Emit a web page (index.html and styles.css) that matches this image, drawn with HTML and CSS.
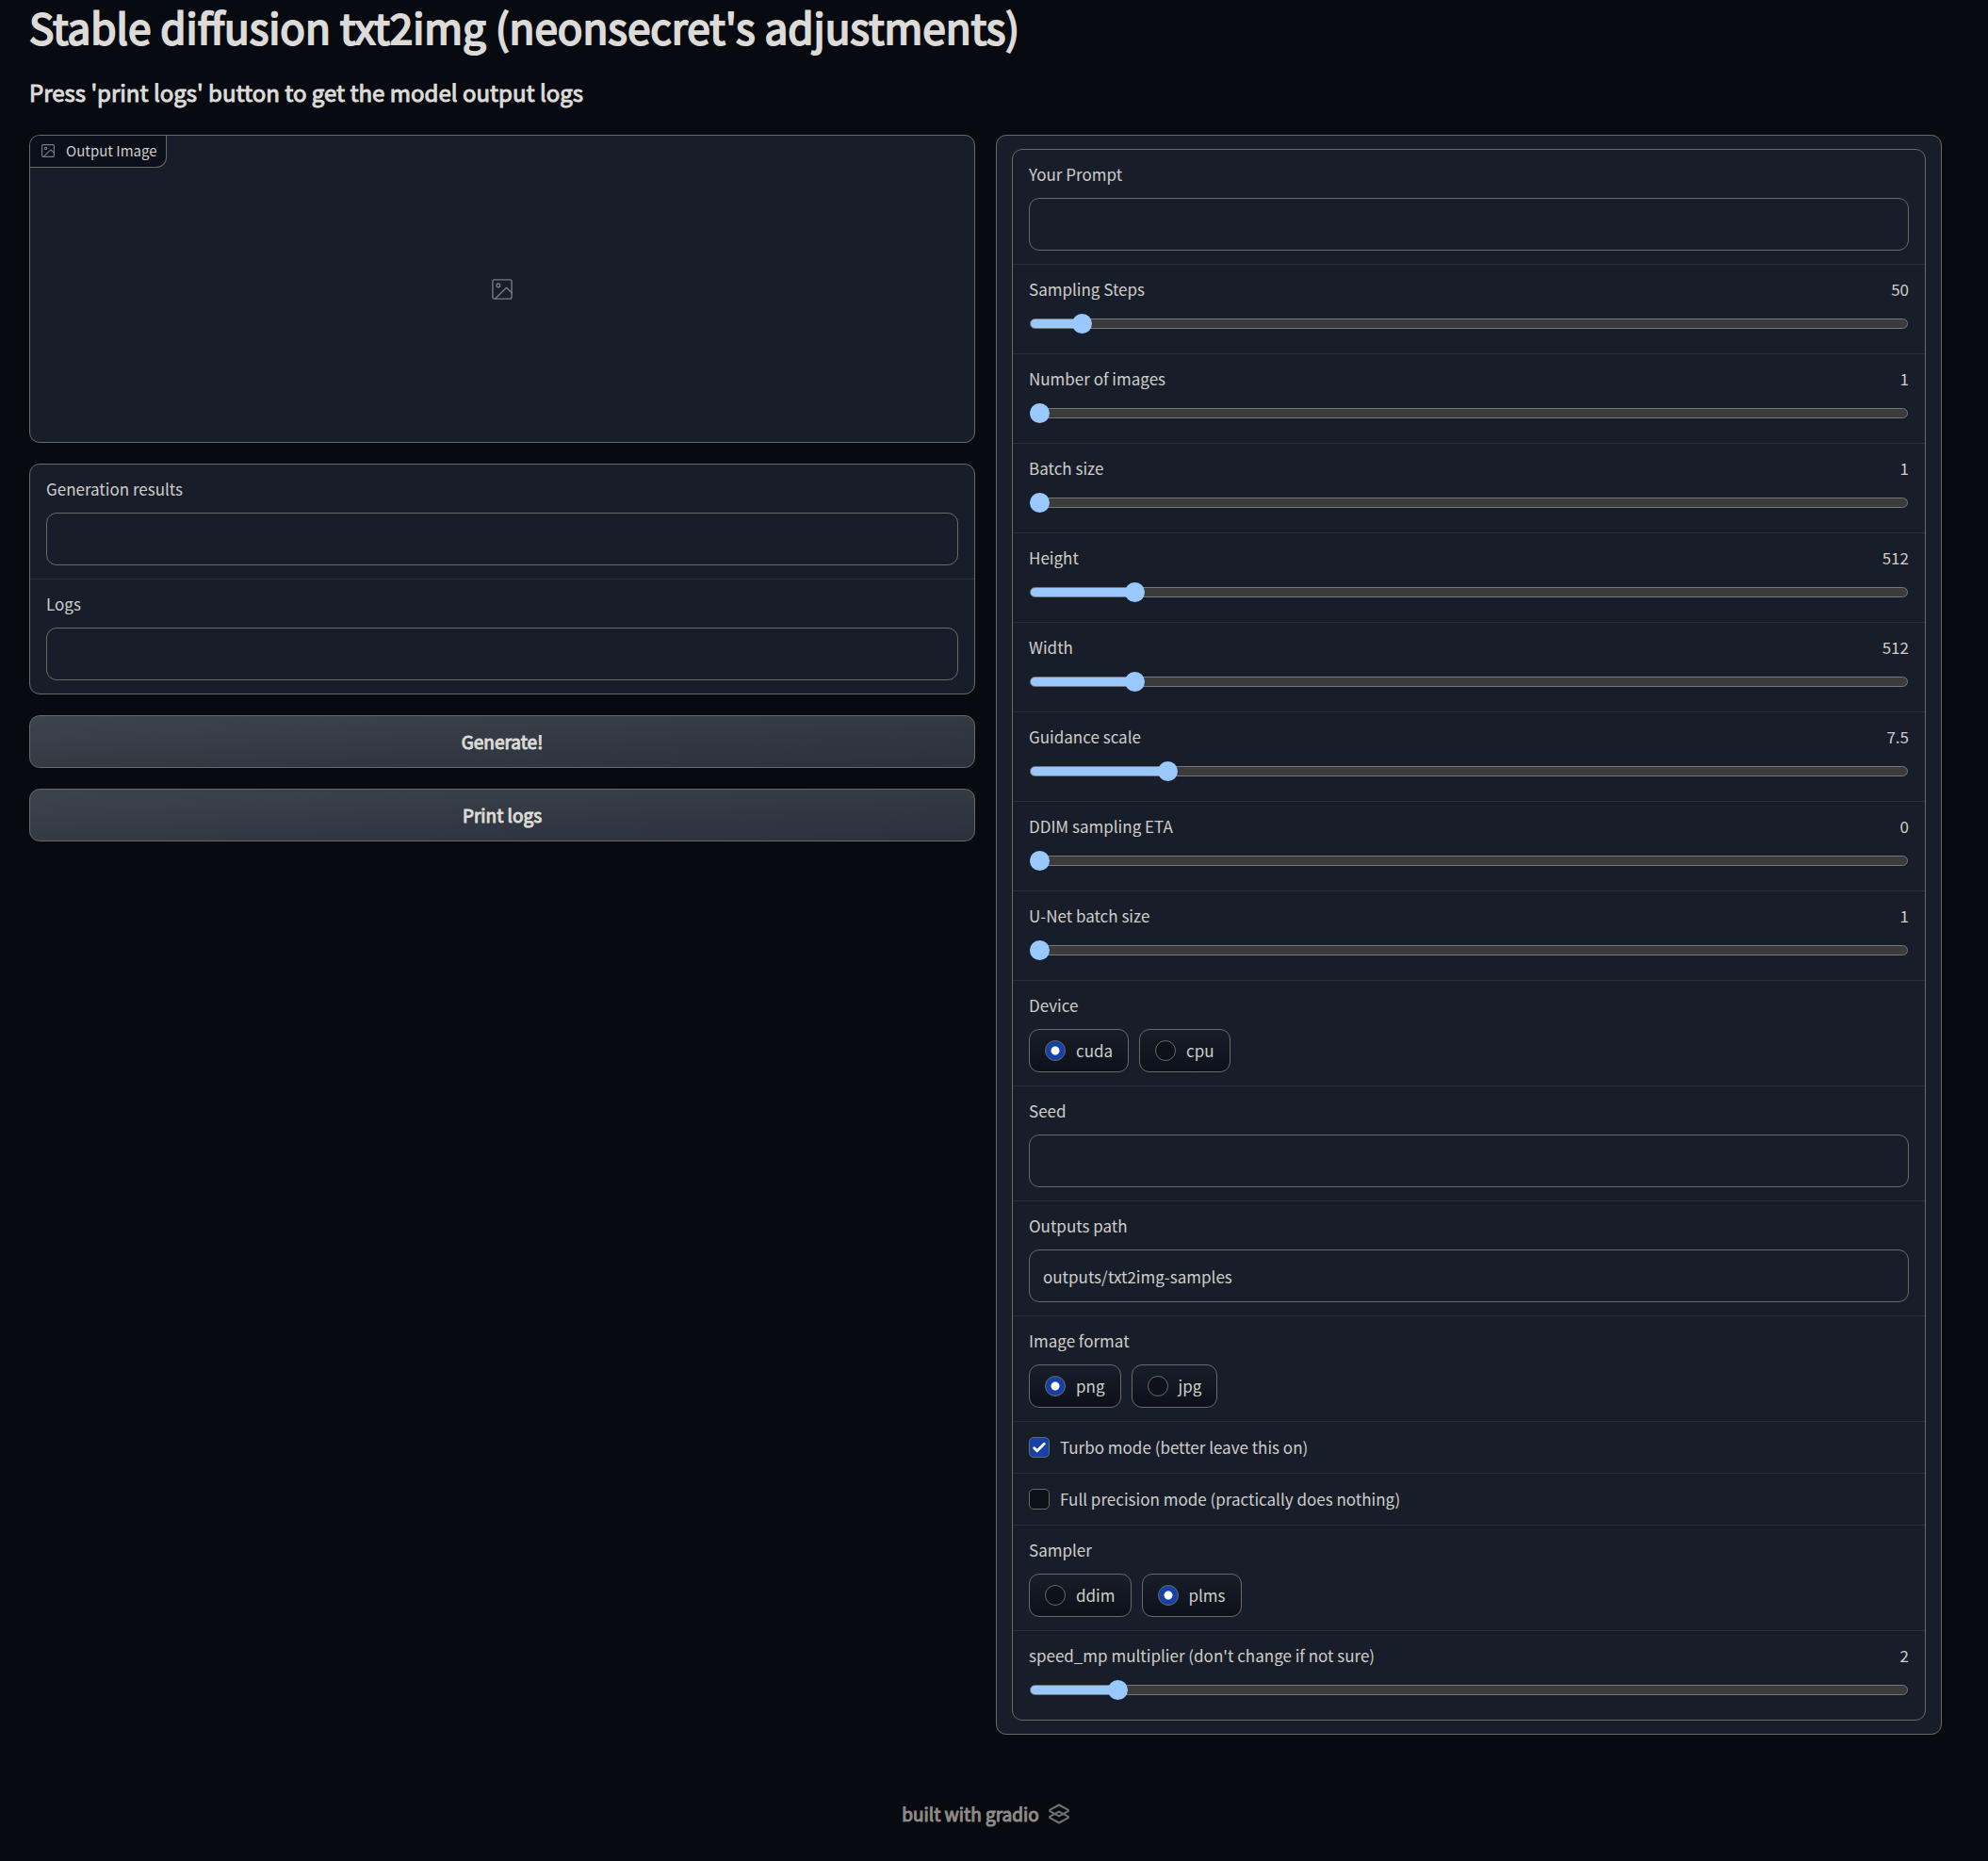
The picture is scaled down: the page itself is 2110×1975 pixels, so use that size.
FILE: index.html
```html
<!DOCTYPE html>
<html lang="en">
<head>
<meta charset="utf-8">
<meta name="viewport" content="width=device-width, initial-scale=1">
<title>Stable diffusion txt2img</title>
<link rel="stylesheet" href="styles.css">
</head>
<body>
<header class="header">
  <h1 class="title">Stable diffusion txt2img (neonsecret's adjustments)</h1>
  <h2 class="subtitle">Press 'print logs' button to get the model output logs</h2>
</header>

<main class="columns">
  <section class="column">
    <figure class="panel preview">
      <figcaption class="preview-label">
        <svg class="icon-small" viewBox="0 0 24 24" fill="none" stroke="currentColor" stroke-width="2" stroke-linecap="round" stroke-linejoin="round" aria-hidden="true"><rect x="1" y="1" width="22" height="22" rx="2"/><circle cx="7.5" cy="7.5" r="2"/><path d="M23 16l-6-6L4 23"/></svg>
        <span>Output Image</span>
      </figcaption>
      <svg class="icon-large" viewBox="0 0 24 24" fill="none" stroke="currentColor" stroke-width="1.5" stroke-linecap="round" stroke-linejoin="round" aria-hidden="true"><rect x="1" y="1" width="22" height="22" rx="2"/><circle cx="7.5" cy="7.5" r="2"/><path d="M23 16l-6-6L4 23"/></svg>
    </figure>

    <div class="panel">
      <div class="field">
        <label class="label" for="results">Generation results</label>
        <input class="textbox" id="results" type="text" readonly>
      </div>
      <div class="field">
        <label class="label" for="logs">Logs</label>
        <input class="textbox" id="logs" type="text" readonly>
      </div>
    </div>

    <button class="button" type="button">Generate!</button>
    <button class="button" type="button">Print logs</button>
  </section>

  <form class="column panel settings">
    <div class="panel">
      <div class="field">
        <label class="label" for="prompt">Your Prompt</label>
        <input class="textbox" id="prompt" type="text">
      </div>
      <div class="field">
        <div class="slider-head"><label class="label" for="steps">Sampling Steps</label><input class="number" type="number" value="50" aria-label="Sampling Steps value"></div>
        <input class="slider" id="steps" type="range" min="1" max="1000" value="50" style="--fill: 0.049">
      </div>
      <div class="field">
        <div class="slider-head"><label class="label" for="images">Number of images</label><input class="number" type="number" value="1" aria-label="Number of images value"></div>
        <input class="slider" id="images" type="range" min="1" max="50" value="1" style="--fill: 0">
      </div>
      <div class="field">
        <div class="slider-head"><label class="label" for="batch">Batch size</label><input class="number" type="number" value="1" aria-label="Batch size value"></div>
        <input class="slider" id="batch" type="range" min="1" max="50" value="1" style="--fill: 0">
      </div>
      <div class="field">
        <div class="slider-head"><label class="label" for="height">Height</label><input class="number" type="number" value="512" aria-label="Height value"></div>
        <input class="slider" id="height" type="range" min="64" max="4096" step="64" value="512" style="--fill: 0.111">
      </div>
      <div class="field">
        <div class="slider-head"><label class="label" for="width">Width</label><input class="number" type="number" value="512" aria-label="Width value"></div>
        <input class="slider" id="width" type="range" min="64" max="4096" step="64" value="512" style="--fill: 0.111">
      </div>
      <div class="field">
        <div class="slider-head"><label class="label" for="guidance">Guidance scale</label><input class="number" type="number" value="7.5" step="0.1" aria-label="Guidance scale value"></div>
        <input class="slider" id="guidance" type="range" min="0" max="50" step="0.1" value="7.5" style="--fill: 0.15">
      </div>
      <div class="field">
        <div class="slider-head"><label class="label" for="eta">DDIM sampling ETA</label><input class="number" type="number" value="0" aria-label="DDIM sampling ETA value"></div>
        <input class="slider" id="eta" type="range" min="0" max="1" step="0.01" value="0" style="--fill: 0">
      </div>
      <div class="field">
        <div class="slider-head"><label class="label" for="unet">U-Net batch size</label><input class="number" type="number" value="1" aria-label="U-Net batch size value"></div>
        <input class="slider" id="unet" type="range" min="1" max="2" step="1" value="1" style="--fill: 0">
      </div>
      <div class="field" role="radiogroup" aria-labelledby="device-label">
        <span class="label" id="device-label">Device</span>
        <div class="options">
          <label class="option"><input class="radio" type="radio" name="device" checked>cuda</label>
          <label class="option"><input class="radio" type="radio" name="device">cpu</label>
        </div>
      </div>
      <div class="field">
        <label class="label" for="seed">Seed</label>
        <input class="textbox" id="seed" type="text">
      </div>
      <div class="field">
        <label class="label" for="outputs">Outputs path</label>
        <input class="textbox" id="outputs" type="text" value="outputs/txt2img-samples">
      </div>
      <div class="field" role="radiogroup" aria-labelledby="format-label">
        <span class="label" id="format-label">Image format</span>
        <div class="options">
          <label class="option"><input class="radio" type="radio" name="format" checked>png</label>
          <label class="option"><input class="radio" type="radio" name="format">jpg</label>
        </div>
      </div>
      <div class="field">
        <label class="check-row"><input class="checkbox" type="checkbox" checked>Turbo mode (better leave this on)</label>
      </div>
      <div class="field">
        <label class="check-row"><input class="checkbox" type="checkbox">Full precision mode (practically does nothing)</label>
      </div>
      <div class="field" role="radiogroup" aria-labelledby="sampler-label">
        <span class="label" id="sampler-label">Sampler</span>
        <div class="options">
          <label class="option"><input class="radio" type="radio" name="sampler">ddim</label>
          <label class="option"><input class="radio" type="radio" name="sampler" checked>plms</label>
        </div>
      </div>
      <div class="field">
        <div class="slider-head"><label class="label" for="speed">speed_mp multiplier (don't change if not sure)</label><input class="number" type="number" value="2" aria-label="speed_mp multiplier value"></div>
        <input class="slider" id="speed" type="range" min="1" max="12" value="2" style="--fill: 0.091">
      </div>
    </div>
  </form>
</main>

<footer class="footer">
  <a class="footer-link" href="#">built with gradio
    <svg class="logo" viewBox="0 0 22 22" fill="none" stroke="currentColor" stroke-width="2" stroke-linejoin="round" aria-hidden="true"><path d="M11 1.5L20.8 6.8V8.2L11 13.4L1.2 8.2V6.8Z"/><path d="M11 20.5L20.8 15.2V13.8L11 8.6L1.2 13.8V15.2Z"/></svg>
  </a>
</footer>
</body>
</html>
```
FILE: styles.css
```css
:root {
  --bg: #070a11;
  --panel: #181e29;
  --line: #6b6965;
  --divider: #29303b;
  --text: #cfcdc9;
  --heading: #dddbd7;
  --accent: #99c8ff;
}

* {
  box-sizing: border-box;
}

body {
  margin: 0;
  padding: 0 49px 0 31px;
  background: var(--bg);
  color: var(--text);
  font: 17px/24px "Noto Sans CJK SC", "Noto Sans", sans-serif;
}

input,
button {
  font: inherit;
  color: inherit;
}

.header {
  height: 143px;
}

.title,
.subtitle {
  margin: 0;
  color: var(--heading);
  font-weight: 400;
}

.title {
  font-size: 44px;
  line-height: 56px;
  -webkit-text-stroke: 2px currentColor;
}

.subtitle {
  padding-top: 22px;
  font-size: 24px;
  line-height: 40px;
  -webkit-text-stroke: 1px currentColor;
}

.columns {
  display: grid;
  grid-template-columns: 1fr 1fr;
  align-items: start;
  gap: 22px;
}

.column {
  display: flex;
  flex-direction: column;
  gap: 22px;
}

.panel {
  overflow: hidden;
  background: var(--panel);
  border: 1px solid var(--line);
  border-radius: 11px;
}

.settings {
  padding: 14px 16px;
}

.preview {
  position: relative;
  display: grid;
  place-items: center;
  height: 327px;
  margin: 0;
  color: #767b84;
}

.preview-label {
  position: absolute;
  top: 0;
  left: 0;
  display: flex;
  align-items: center;
  gap: 12px;
  height: 34px;
  padding: 0 9px 2px 12px;
  background: #0b0f19;
  border: solid var(--line);
  border-width: 0 1px 1px 0;
  border-radius: 0 0 11px 0;
  font-size: 15px;
}

.preview-label span {
  color: var(--text);
}

.icon-small {
  width: 14px;
  height: 14px;
}

.icon-large {
  width: 22px;
  height: 22px;
}

.field {
  display: flex;
  flex-direction: column;
  gap: 13px;
  padding: 14px 17px;
}

.field + .field {
  border-top: 1px solid var(--divider);
}

.textbox {
  width: 100%;
  height: 56px;
  padding: 0 14px;
  background: transparent;
  border: 1px solid var(--line);
  border-radius: 11px;
}

.slider-head {
  display: flex;
  justify-content: space-between;
}

.number {
  width: 96px;
  height: 24px;
  padding: 0;
  background: transparent;
  border: 0;
  text-align: right;
  appearance: textfield;
}

.number::-webkit-inner-spin-button {
  appearance: none;
  margin: 0;
}

.slider {
  width: 100%;
  height: 22px;
  margin: 0 0 7px;
  background: transparent;
  appearance: none;
}

.slider::-webkit-slider-runnable-track {
  height: 11px;
  margin: 0 1px;
  background: linear-gradient(to right, var(--accent) calc((100% - 20px) * var(--fill) + 10px), #3b3b3b 0);
  border: 1px solid #75777a;
  border-radius: 6px;
}

.slider::-webkit-slider-thumb {
  width: 21px;
  height: 21px;
  margin: -6px -1px 0;
  background: var(--accent);
  border-radius: 50%;
  appearance: none;
}

.options {
  display: flex;
  gap: 11px;
}

.option {
  display: flex;
  align-items: center;
  gap: 11px;
  height: 46px;
  padding: 0 16px;
  background: linear-gradient(#181e29, #0c101a);
  border: 1px solid var(--line);
  border-radius: 11px;
}

.radio,
.checkbox {
  width: 22px;
  height: 22px;
  margin: 0;
  background: #0d1119;
  border: 1px solid var(--line);
  appearance: none;
}

.radio {
  border-radius: 50%;
}

.radio:checked {
  background: radial-gradient(circle, #fff 4px, #1541a8 5px);
}

.checkbox {
  border-radius: 5px;
}

.checkbox:checked {
  background: #1541a8 url("data:image/svg+xml,%3Csvg viewBox='0 0 16 16' fill='white' xmlns='http://www.w3.org/2000/svg'%3E%3Cpath d='M12.207 4.793a1 1 0 010 1.414l-5 5a1 1 0 01-1.414 0l-2-2a1 1 0 011.414-1.414L6.5 9.086l4.293-4.293a1 1 0 011.414 0z'/%3E%3C/svg%3E") center / 120%;
}

.check-row {
  display: flex;
  align-items: center;
  gap: 11px;
  height: 26px;
}

.button {
  height: 56px;
  padding: 0;
  background: linear-gradient(to bottom right, #3b444b, #2b303d);
  border: 1px solid var(--line);
  border-radius: 11px;
  color: var(--heading);
  font-size: 19px;
  -webkit-text-stroke: 1px currentColor;
}

.footer {
  display: flex;
  justify-content: center;
  padding: 68px 0 34px;
}

.footer-link {
  display: flex;
  align-items: center;
  gap: 10px;
  color: #918c84;
  font-size: 19px;
  line-height: 32px;
  text-decoration: none;
  -webkit-text-stroke: 1px currentColor;
}

.logo {
  width: 22px;
  height: 22px;
  color: #707174;
}
```
